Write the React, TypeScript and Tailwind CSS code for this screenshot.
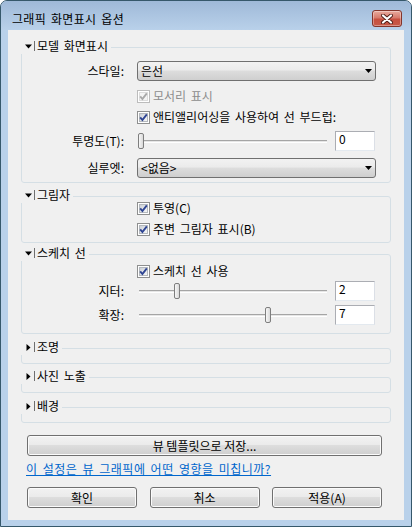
import React from 'react';

const FONT = "font-['Noto_Sans_CJK_KR','Noto_Sans',sans-serif]";
const BTN_BG = 'bg-[linear-gradient(#f2f2f2,#ebebeb_45%,#dddddd_50%,#cfcfcf)]';

const Arrow: React.FC<{ open: boolean }> = ({ open }) => (
  <svg width="7" height="7" viewBox="0 0 7 7" className="shrink-0">
    {open ? <polygon points="0,1.5 7,1.5 3.5,5.5" fill="#000" /> : <polygon points="1.5,0 5.5,3.5 1.5,7" fill="#000" />}
  </svg>
);

const Group: React.FC<{ title: string; open?: boolean; className?: string; children?: React.ReactNode }> = ({
  title,
  open = false,
  className = '',
  children,
}) => (
  <div className={`relative mx-[13px] rounded-[3px] border border-[#d5dfe5] ${className}`}>
    {/* header sits over the top border */}
    <div className="absolute -left-[1px] -top-[10px] flex h-[16px] items-center bg-[#f0f0f0] pr-[3px]">
      <span className="ml-[4px] flex">
        <Arrow open={open} />
      </span>
      <span className="ml-[2px] h-[10px] w-px bg-[#6f6f6f]" />
      <span className="ml-[2px] text-[12px] leading-[16px]">{title}</span>
    </div>
    {children}
  </div>
);

const Check: React.FC<{ disabled?: boolean }> = ({ disabled = false }) => (
  <span
    className={`relative flex h-[13px] w-[13px] shrink-0 items-center justify-center border bg-white ${
      disabled ? 'border-[#bcbcbc]' : 'border-[#8e8f8f]'
    }`}
  >
    <span
      className={`h-[9px] w-[9px] border ${
        disabled
          ? 'border-[#dcdcdc] bg-[#f4f4f4]'
          : 'border-[#b4b8bd] bg-[linear-gradient(135deg,#cdd1d6,#f6f7f8)]'
      }`}
    />
    <svg width="13" height="13" viewBox="0 0 13 13" className="absolute -left-[1px] -top-[1px]">
      <polyline
        points="3.2,6.4 5.4,9 9.8,3.4"
        fill="none"
        stroke={disabled ? '#a9a9a9' : '#2f4593'}
        strokeWidth="1.9"
      />
    </svg>
  </span>
);

const CheckItem: React.FC<{ label: string; disabled?: boolean; className?: string }> = ({
  label,
  disabled = false,
  className = '',
}) => (
  <div className={`flex h-[16px] items-center pl-[115px] ${className}`}>
    <Check disabled={disabled} />
    <span className={`ml-[3px] whitespace-nowrap text-[12px] leading-[16px] ${disabled ? 'text-[#8d8d8d]' : ''}`}>
      {label}
    </span>
  </div>
);

const Row: React.FC<{ label: string; className?: string; children: React.ReactNode }> = ({
  label,
  className = '',
  children,
}) => (
  <div className={`flex items-center ${className}`}>
    <div className="w-[102px] text-right text-[12px] leading-[16px]">{label}</div>
    <div className="ml-[13px] flex items-center">{children}</div>
  </div>
);

const Combo: React.FC<{ value: string }> = ({ value }) => (
  <div
    className={`flex h-[20px] w-[239px] items-center justify-between rounded-[3px] border border-[#707070] ${BTN_BG} pl-[3px] pr-[3px]`}
  >
    <span className="text-[12px] leading-[16px]">{value}</span>
    <svg width="7" height="4" viewBox="0 0 7 4">
      <polygon points="0,0 7,0 3.5,4" fill="#000" />
    </svg>
  </div>
);

const Slider: React.FC<{ thumb: string }> = ({ thumb }) => (
  <div className="relative flex h-[20px] w-[190px] items-center pl-[2px]">
    <div className="h-[3px] w-full border-t border-[#a5a5a5] border-b border-b-white bg-[#e6e6e6]" />
    <div
      className={`absolute top-[2px] h-[16px] w-[6px] rounded-[2px] border border-[#7e7e7e] bg-[linear-gradient(90deg,#f7f7f7,#d9d9d9)] ${thumb}`}
    />
  </div>
);

const Field: React.FC<{ value: string }> = ({ value }) => (
  <div className="ml-[8px] h-[20px] w-[40px] border border-[#abadb3] border-r-[#dbdfe6] border-b-[#e3e9ef] bg-white pl-[3px] text-[12px] leading-[14px]">
    {value}
  </div>
);

const Button: React.FC<{ className?: string; children: React.ReactNode }> = ({ className = '', children }) => (
  <button
    type="button"
    className={`flex h-[21px] items-center justify-center rounded-[3px] border border-[#707070] ${BTN_BG} text-[12px] leading-[16px] shadow-[inset_0_0_0_1px_#fbfbfb] ${className}`}
  >
    {children}
  </button>
);

export default function App() {
  return (
    <div
      className={`${FONT} h-[527px] w-[412px] overflow-hidden rounded-t-[7px] border border-[#36586b] bg-[#b9d1ea] text-black [word-spacing:2px]`}
    >
      {/* title bar */}
      <div className="flex h-[29px] bg-[linear-gradient(#9fb9d8,#b9d1ea)]">
        <div className="pl-[11px] pt-[9px] text-[12px] leading-[17px] tracking-[0.3px]">그래픽 화면표시 옵션</div>
        <button
          type="button"
          className="ml-auto mr-[9px] mt-[9px] flex h-[17px] w-[30px] items-center justify-center rounded-[3px] border border-[#83352b] bg-[linear-gradient(#e9ab9e,#d77b6c_45%,#c7503f_55%,#c75a48)] shadow-[inset_0_0_0_1px_rgba(255,255,255,0.35)]"
        >
          <svg width="12" height="10" viewBox="0 0 12 10">
            <path d="M2 1.5 L10 8.5 M10 1.5 L2 8.5" stroke="#4e1e17" strokeWidth="4" strokeLinecap="round" />
            <path d="M2 1.5 L10 8.5 M10 1.5 L2 8.5" stroke="#fff" strokeWidth="2.2" strokeLinecap="round" />
          </svg>
        </button>
      </div>

      {/* client area */}
      <div className="mx-[7px] h-[490px] bg-[#f0f0f0] pt-[17px]">
        <Group title="모델 화면표시" open className="pt-[13px] pb-[4px]">
          <Row label="스타일:">
            <Combo value="은선" />
          </Row>
          <CheckItem className="mt-[7px]" disabled label="모서리 표시" />
          <CheckItem className="mt-[5px]" label="앤티앨리어싱을 사용하여 선 부드럽:" />
          <Row className="mt-[6px]" label="투명도(T):">
            <Slider thumb="left-[1px]" />
            <Field value="0" />
          </Row>
          <Row className="mt-[7px]" label="실루엣:">
            <Combo value={'<없음>'} />
          </Row>
        </Group>

        <Group title="그림자" open className="mt-[13px] pt-[3px] pb-[5px]">
          <CheckItem label="투영(C)" />
          <CheckItem className="mt-[5px]" label="주변 그림자 표시(B)" />
        </Group>

        <Group title="스케치 선" open className="mt-[11px] pt-[8px] pb-[8px]">
          <CheckItem label="스케치 선 사용" />
          <Row className="mt-[2px]" label="지터:">
            <Slider thumb="left-[37px]" />
            <Field value="2" />
          </Row>
          <Row className="mt-[4px]" label="확장:">
            <Slider thumb="left-[128px]" />
            <Field value="7" />
          </Row>
        </Group>

        <Group title="조명" className="mt-[14px] h-[16px]" />
        <Group title="사진 노출" className="mt-[13px] h-[16px]" />
        <Group title="배경" className="mt-[14px] h-[16px]" />

        <div className="mt-[12px] pl-[19px]">
          <Button className="w-[355px]">뷰 템플릿으로 저장...</Button>
        </div>

        <div className="mt-[5px] pl-[18px] text-[12px] leading-[16px] tracking-[0.5px] text-[#0066cc] underline">
          이 설정은 뷰 그래픽에 어떤 영향을 미칩니까?
        </div>

        <div className="mt-[10px] flex w-[374px] justify-between pl-[19px]">
          <Button className="w-[110px]">확인</Button>
          <Button className="w-[110px]">취소</Button>
          <Button className="w-[110px]">적용(A)</Button>
        </div>
      </div>
    </div>
  );
}
